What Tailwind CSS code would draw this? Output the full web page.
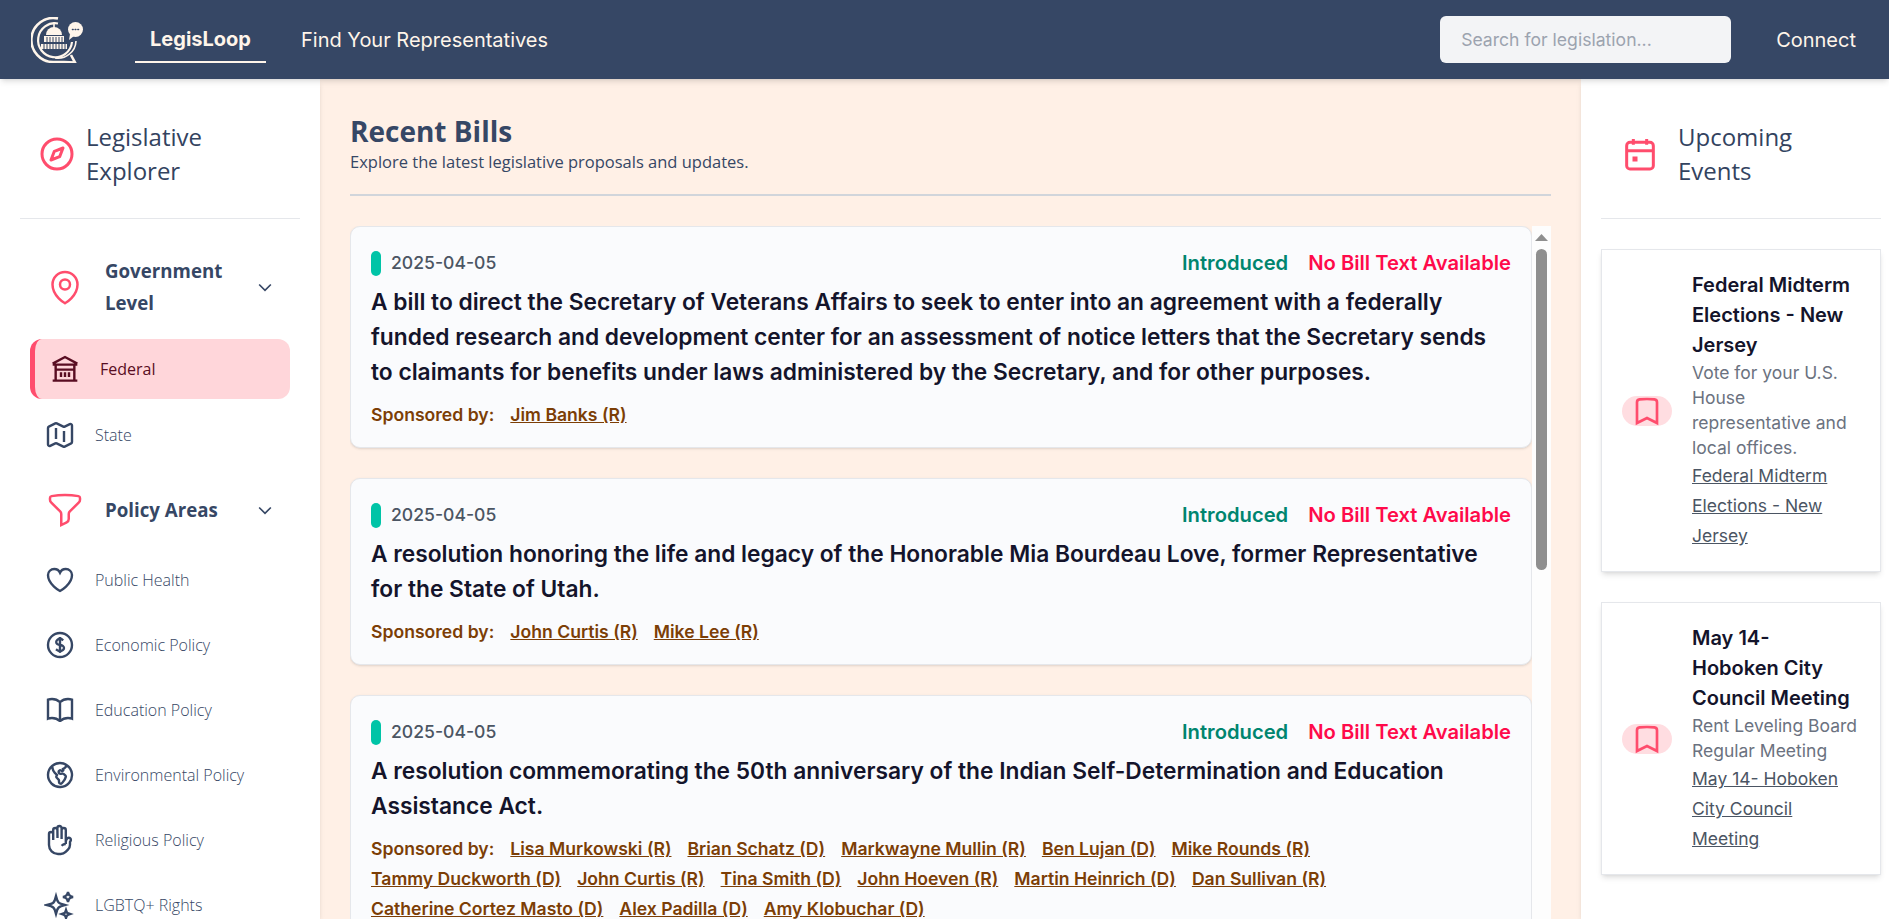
<!DOCTYPE html>
<html lang="en">
<head>
  <meta charset="UTF-8" />
  <meta name="viewport" content="width=device-width, initial-scale=1.0"/>
  <title>LegisLoop</title>
  <script src="https://cdn.jsdelivr.net/npm/@tailwindcss/browser@4"></script>
</head>
<body class="h-screen overflow-hidden flex flex-col bg-white font-['Inter',sans-serif]">

  <!-- top nav -->
  <header class="relative z-20 h-[79px] shrink-0 bg-[#364765] shadow-md flex items-center text-[#fff5ea]">
    <svg class="ml-[31px] w-[52px] h-[46px]" viewBox="0 0 52 46" fill="none" stroke="currentColor">
      <path d="M27 1.500A22 22 0 1 0 23 45H33L44 45.500L40 38" stroke-width="2.600"/>
      <path d="M27 6.500A17 17 0 1 0 41 25" stroke-width="2.200"/>
      <path d="M24 41A18 18 0 0 0 45 24" stroke-width="1.600"/>
      <path d="M10 27H36V32H10Z M13 19H33V25H13Z" fill="currentColor" stroke="none"/>
      <path d="M15 18A8 8 0 0 1 31 18Z" fill="currentColor" stroke="none"/>
      <path d="M23 5V12" stroke-width="1.600"/>
      <path d="M16 20V25M19 20V25M22 20V25M25 20V25M28 20V25M31 20V25" stroke="#364765" stroke-width="1"/>
      <path d="M13 27V32M16 27V32M19 27V32M22 27V32M25 27V32M28 27V32M31 27V32M34 27V32" stroke="#364765" stroke-width="1"/>
      <circle cx="44.500" cy="12.500" r="7.500" fill="currentColor" stroke="none"/>
      <path d="M39 17L38 23L43 19Z" fill="currentColor" stroke="none"/>
      <path d="M41.500 12.500h.6M44.200 12.500h.6M46.900 12.500h.6" stroke="#364765" stroke-width="1.600" stroke-linecap="round"/>
    </svg>
    <a class="ml-[52px] h-[47px] w-[131px] border-b-2 border-[#fff5ea] flex items-center justify-center text-xl font-bold">LegisLoop</a>
    <a class="ml-[35px] text-xl font-normal">Find Your Representatives</a>
    <input type="text" placeholder="Search for legislation..." class="ml-auto w-[291px] h-[47px] rounded-md bg-[#f3f4f6] px-[21px] text-[17.600px] text-gray-800 placeholder:text-[#9ca3af]" />
    <a class="ml-[45px] mr-[33px] text-xl font-normal">Connect</a>
  </header>

  <div class="flex flex-1 min-h-0">

    <!-- left sidebar -->
    <aside class="relative z-10 w-[320px] shrink-0 bg-white shadow-md overflow-hidden px-[20px] font-['Open_Sans',sans-serif] text-[#364765]">
      <div class="h-[140px] border-b border-[#e5e7eb] flex items-center gap-[9px] pl-[17px] pt-[10px]">
        <svg class="w-10 h-10 shrink-0 text-[#ff4d6d]" fill="none" viewBox="0 0 24 24" stroke="currentColor" stroke-width="1.800"><circle cx="12" cy="12" r="9"/><path d="M15.600 8.400 13.600 13.600 8.400 15.600 10.400 10.400Z" stroke-linejoin="round"/></svg>
        <h2 class="w-[130px] text-2xl leading-[34px] font-medium text-[#33435f]">Legislative Explorer</h2>
      </div>

      <div class="mt-[19px] h-[97px] flex items-center pl-[25px] pr-[25px]">
        <svg class="w-10 h-10 shrink-0 text-[#ff4d6d]" fill="none" viewBox="0 0 24 24" stroke="currentColor" stroke-width="1.500"><path d="M15 10.500a3 3 0 1 1-6 0 3 3 0 0 1 6 0Z"/><path d="M19.500 10.500c0 7.142-7.500 11.250-7.500 11.250S4.500 17.642 4.500 10.500a7.500 7.500 0 1 1 15 0Z"/></svg>
        <span class="ml-[20px] w-[125px] text-[18.700px] leading-8 font-bold">Government Level</span>
        <svg class="ml-auto w-5 h-5" fill="none" viewBox="0 0 24 24" stroke="currentColor" stroke-width="2"><path d="m5 9 7 7 7-7"/></svg>
      </div>

      <a class="mt-[4px] ml-[10px] w-[260px] h-[60px] rounded-xl bg-[#ffd6da] border-l-[5px] border-[#ff4d6d] flex items-center gap-[19px] pl-[14px] text-[#590d22] font-medium">
        <svg class="w-8 h-8 shrink-0" fill="none" viewBox="0 0 24 24" stroke="currentColor" stroke-width="1.800"><path d="M2.750 8 12 3l9.250 5M2.750 8.750h18.500M5 9v11.500M19 9v11.500M2.750 20.750h18.500M5 12.500h14M9 14.500v3.500M12 14.500v3.500M15 14.500v3.500"/></svg>
        Federal
      </a>
      <a class="mt-[6px] h-[60px] flex items-center gap-[19px] pl-[24px] font-light">
        <svg class="w-8 h-8 shrink-0" fill="none" viewBox="0 0 24 24" stroke="currentColor" stroke-width="1.800"><path d="M9 6.750V15m6-6v8.250m.503 3.498 4.875-2.437c.381-.19.622-.58.622-1.006V4.820c0-.836-.88-1.380-1.628-1.006l-3.869 1.934c-.317.159-.69.159-1.006 0L9.503 3.252a1.125 1.125 0 0 0-1.006 0L3.622 5.689C3.240 5.880 3 6.270 3 6.695V19.180c0 .836.88 1.380 1.628 1.006l3.869-1.934c.317-.159.69-.159 1.006 0l4.994 2.497c.317.158.69.158 1.006 0Z"/></svg>
        State
      </a>

      <div class="mt-[15px] h-[60px] flex items-center pl-[25px] pr-[25px]">
        <svg class="w-10 h-10 shrink-0 text-[#ff4d6d]" fill="none" viewBox="0 0 24 24" stroke="currentColor" stroke-width="1.500"><path d="M12 3c2.755 0 5.455.232 8.083.678.533.09.917.556.917 1.096v1.044a2.250 2.250 0 0 1-.659 1.591l-5.432 5.432a2.250 2.250 0 0 0-.659 1.591v2.927a2.250 2.250 0 0 1-1.244 2.013L9.750 21v-6.568a2.250 2.250 0 0 0-.659-1.591L3.659 7.409A2.250 2.250 0 0 1 3 5.818V4.774c0-.54.384-1.006.917-1.096A48.320 48.320 0 0 1 12 3Z"/></svg>
        <span class="ml-[20px] text-[18.700px] font-bold">Policy Areas</span>
        <svg class="ml-auto w-5 h-5" fill="none" viewBox="0 0 24 24" stroke="currentColor" stroke-width="2"><path d="m5 9 7 7 7-7"/></svg>
      </div>

      <div class="mt-[10px] flex flex-col gap-[5px] font-light">
        <a class="h-[60px] flex items-center gap-[19px] pl-[24px]">
          <svg class="w-8 h-8 shrink-0" fill="none" viewBox="0 0 24 24" stroke="currentColor" stroke-width="1.800"><path d="M21 8.250c0-2.485-2.099-4.500-4.688-4.500-1.935 0-3.597 1.126-4.312 2.733-.715-1.607-2.377-2.733-4.313-2.733C5.100 3.750 3 5.765 3 8.250c0 7.220 9 12 9 12s9-4.780 9-12Z"/></svg>
          Public Health
        </a>
        <a class="h-[60px] flex items-center gap-[19px] pl-[24px]">
          <svg class="w-8 h-8 shrink-0" fill="none" viewBox="0 0 24 24" stroke="currentColor" stroke-width="1.800"><path d="M12 6v12m-3-2.818.879.659c1.171.879 3.070.879 4.242 0 1.172-.879 1.172-2.303 0-3.182C13.536 12.219 12.768 12 12 12c-.725 0-1.450-.22-2.003-.659-1.106-.879-1.106-2.303 0-3.182s2.900-.879 4.006 0l.415.33M21 12a9 9 0 1 1-18 0 9 9 0 0 1 18 0Z"/></svg>
          Economic Policy
        </a>
        <a class="h-[60px] flex items-center gap-[19px] pl-[24px]">
          <svg class="w-8 h-8 shrink-0" fill="none" viewBox="0 0 24 24" stroke="currentColor" stroke-width="1.800"><path d="M12 6.042A8.967 8.967 0 0 0 6 3.750c-1.052 0-2.062.18-3 .512v14.250A8.987 8.987 0 0 1 6 18c2.305 0 4.408.867 6 2.292m0-14.250a8.966 8.966 0 0 1 6-2.292c1.052 0 2.062.18 3 .512v14.250A8.987 8.987 0 0 0 18 18a8.967 8.967 0 0 0-6 2.292m0-14.250v14.250"/></svg>
          Education Policy
        </a>
        <a class="h-[60px] flex items-center gap-[19px] pl-[24px]">
          <svg class="w-8 h-8 shrink-0" fill="none" viewBox="0 0 24 24" stroke="currentColor" stroke-width="1.800"><path d="m6.115 5.190.319 1.913A6 6 0 0 0 8.110 10.360L9.750 12l-.387.775c-.217.433-.132.956.21 1.298l1.348 1.348c.21.21.329.497.329.795v1.089c0 .426.24.815.622 1.006l.153.076c.433.217.956.132 1.298-.21l.723-.723a8.700 8.700 0 0 0 2.288-4.042 1.087 1.087 0 0 0-.358-1.099l-1.330-1.108c-.251-.21-.582-.299-.905-.245l-1.170.195a1.125 1.125 0 0 1-.98-.314l-.295-.295a1.125 1.125 0 0 1 0-1.591l.13-.132a1.125 1.125 0 0 1 1.300-.21l.603.302a.809.809 0 0 0 1.086-1.086L14.250 7.500l1.256-.837a4.500 4.500 0 0 0 1.528-1.732l.146-.292M6.115 5.190A9 9 0 1 0 17.180 4.640M6.115 5.190A8.965 8.965 0 0 1 12 3c1.929 0 3.716.607 5.180 1.640"/></svg>
          Environmental Policy
        </a>
        <a class="h-[60px] flex items-center gap-[19px] pl-[24px]">
          <svg class="w-8 h-8 shrink-0" fill="none" viewBox="0 0 24 24" stroke="currentColor" stroke-width="1.800"><path d="M10.050 4.575a1.575 1.575 0 1 0-3.150 0v3m3.150-3v-1.500a1.575 1.575 0 0 1 3.150 0v1.500m-3.150 0 .075 5.925m3.075.75V4.575m0 0a1.575 1.575 0 0 1 3.150 0V15M6.900 7.575a1.575 1.575 0 1 0-3.150 0v8.175a6.750 6.750 0 0 0 6.750 6.750h2.018a5.250 5.250 0 0 0 3.712-1.538l1.732-1.732a5.250 5.250 0 0 0 1.538-3.712l.003-2.024a.668.668 0 0 1 .198-.471 1.575 1.575 0 1 0-2.228-2.228 3.818 3.818 0 0 0-1.120 2.687M6.900 7.575V12m6.270 4.318A4.490 4.490 0 0 1 16.350 15m.002 0h-.002"/></svg>
          Religious Policy
        </a>
        <a class="h-[60px] flex items-center gap-[19px] pl-[24px]">
          <svg class="w-8 h-8 shrink-0" fill="none" viewBox="0 0 24 24" stroke="currentColor" stroke-width="1.800"><path d="M9.813 15.904 9 18.750l-.813-2.846a4.500 4.500 0 0 0-3.090-3.090L2.250 12l2.846-.813a4.500 4.500 0 0 0 3.090-3.090L9 5.250l.813 2.846a4.500 4.500 0 0 0 3.090 3.090L15.750 12l-2.846.813a4.500 4.500 0 0 0-3.090 3.090ZM18.259 8.715 18 9.750l-.259-1.035a3.375 3.375 0 0 0-2.455-2.456L14.250 6l1.036-.259a3.375 3.375 0 0 0 2.455-2.456L18 2.250l.259 1.035a3.375 3.375 0 0 0 2.456 2.456L21.750 6l-1.035.259a3.375 3.375 0 0 0-2.456 2.456ZM16.894 20.567 16.500 21.750l-.394-1.183a2.250 2.250 0 0 0-1.423-1.423L13.500 18.750l1.183-.394a2.250 2.250 0 0 0 1.423-1.423l.394-1.183.394 1.183a2.250 2.250 0 0 0 1.423 1.423l1.183.394-1.183.394a2.250 2.250 0 0 0-1.423 1.423Z"/></svg>
          LGBTQ+ Rights
        </a>
      </div>
    </aside>

    <!-- bills -->
    <main class="flex-1 min-w-0 bg-[#fff0e6] flex flex-col pl-[30px] pr-[30px]">
      <div class="h-[117px] shrink-0 border-b-2 border-[#d1d5db] pt-[34px] font-['Open_Sans',sans-serif] text-[#364765]">
        <h1 class="text-[28px] leading-[36px] font-bold">Recent Bills</h1>
        <p class="text-[16.500px] leading-6 mt-[1px]">Explore the latest legislative proposals and updates.</p>
      </div>

      <div class="mt-[30px] flex-1 min-h-0 flex">
        <div class="flex-1 min-w-0 overflow-hidden flex flex-col gap-[30px]">

          <article class="shrink-0 rounded-[10px] border border-[#e5e7eb] bg-[#fafbfd] shadow-sm px-[20px] pt-[24px] pb-[17px]">
            <div class="flex items-center h-[25px]">
              <span class="w-[10px] h-[25px] rounded-full bg-[#00c4a7]"></span>
              <span class="ml-[10px] text-[17.600px] font-medium text-[#4b5563]">2025-04-05</span>
              <span class="ml-auto text-[20.200px] font-semibold text-[#00856f]">Introduced</span>
              <span class="ml-[20px] text-[20.200px] font-semibold text-[#ff0a4a]">No Bill Text Available</span>
            </div>
            <h3 class="mt-[8px] text-[22.750px] leading-[35px] font-semibold text-[#14142b]">A bill to direct the Secretary of Veterans Affairs to seek to enter into an agreement with a federally funded research and development center for an assessment of notice letters that the Secretary sends to claimants for benefits under laws administered by the Secretary, and for other purposes.</h3>
            <div class="mt-[11px] flex flex-wrap gap-x-[16px] text-[17.600px] leading-[30px] font-semibold text-[#7c3e06]">
              <span>Sponsored by:</span>
              <a class="underline">Jim Banks (R)</a>
            </div>
          </article>

          <article class="shrink-0 rounded-[10px] border border-[#e5e7eb] bg-[#fafbfd] shadow-sm px-[20px] pt-[24px] pb-[17px]">
            <div class="flex items-center h-[25px]">
              <span class="w-[10px] h-[25px] rounded-full bg-[#00c4a7]"></span>
              <span class="ml-[10px] text-[17.600px] font-medium text-[#4b5563]">2025-04-05</span>
              <span class="ml-auto text-[20.200px] font-semibold text-[#00856f]">Introduced</span>
              <span class="ml-[20px] text-[20.200px] font-semibold text-[#ff0a4a]">No Bill Text Available</span>
            </div>
            <h3 class="mt-[8px] text-[22.750px] leading-[35px] font-semibold text-[#14142b]">A resolution honoring the life and legacy of the Honorable Mia Bourdeau Love, former Representative for the State of Utah.</h3>
            <div class="mt-[11px] flex flex-wrap gap-x-[16px] text-[17.600px] leading-[30px] font-semibold text-[#7c3e06]">
              <span>Sponsored by:</span>
              <a class="underline">John Curtis (R)</a>
              <a class="underline">Mike Lee (R)</a>
            </div>
          </article>

          <article class="shrink-0 rounded-[10px] border border-[#e5e7eb] bg-[#fafbfd] shadow-sm px-[20px] pt-[24px] pb-[17px]">
            <div class="flex items-center h-[25px]">
              <span class="w-[10px] h-[25px] rounded-full bg-[#00c4a7]"></span>
              <span class="ml-[10px] text-[17.600px] font-medium text-[#4b5563]">2025-04-05</span>
              <span class="ml-auto text-[20.200px] font-semibold text-[#00856f]">Introduced</span>
              <span class="ml-[20px] text-[20.200px] font-semibold text-[#ff0a4a]">No Bill Text Available</span>
            </div>
            <h3 class="mt-[8px] text-[22.750px] leading-[35px] font-semibold text-[#14142b]">A resolution commemorating the 50th anniversary of the Indian Self-Determination and Education Assistance Act.</h3>
            <div class="mt-[11px] flex flex-wrap gap-x-[16px] text-[17.600px] leading-[30px] font-semibold text-[#7c3e06]">
              <span>Sponsored by:</span>
              <a class="underline">Lisa Murkowski (R)</a>
              <a class="underline">Brian Schatz (D)</a>
              <a class="underline">Markwayne Mullin (R)</a>
              <a class="underline">Ben Lujan (D)</a>
              <a class="underline">Mike Rounds (R)</a>
              <a class="underline">Tammy Duckworth (D)</a>
              <a class="underline">John Curtis (R)</a>
              <a class="underline">Tina Smith (D)</a>
              <a class="underline">John Hoeven (R)</a>
              <a class="underline">Martin Heinrich (D)</a>
              <a class="underline">Dan Sullivan (R)</a>
              <a class="underline">Catherine Cortez Masto (D)</a>
              <a class="underline">Alex Padilla (D)</a>
              <a class="underline">Amy Klobuchar (D)</a>
            </div>
          </article>
        </div>

        <!-- scrollbar -->
        <div class="w-[19px] shrink-0 bg-[#fdfdfd] flex flex-col items-center pt-[8px]">
          <svg class="w-[13px] h-[7px] text-[#8f8f8f]" viewBox="0 0 13 7" fill="currentColor"><path d="M6.500 0 13 7H0Z"/></svg>
          <div class="mt-[8px] w-[11px] h-[321px] rounded-full bg-[#8f8f8f]"></div>
        </div>
      </div>
    </main>

    <!-- right sidebar -->
    <aside class="relative z-10 w-[308px] shrink-0 bg-white shadow-md overflow-hidden pl-[20px] pr-[8px]">
      <div class="h-[140px] border-b border-[#e5e7eb] flex items-center gap-[18px] pl-[19px] pt-[10px] font-['Open_Sans',sans-serif]">
        <svg class="w-10 h-10 shrink-0 text-[#ff4d6d]" fill="none" viewBox="0 0 24 24" stroke="currentColor" stroke-width="1.800"><rect x="4" y="5" width="16" height="16" rx="2"/><path d="M4 10h16M8 3v3.500M16 3v3.500"/><rect x="7.500" y="13.500" width="3" height="3" fill="currentColor" stroke="none"/></svg>
        <h2 class="w-[130px] text-2xl leading-[34px] font-medium text-[#33435f]">Upcoming Events</h2>
      </div>

      <div class="mt-[30px] flex flex-col gap-[30px]">
        <article class="flex items-center gap-5 border border-[#e5e7eb] bg-white shadow-md p-5">
          <span class="w-[50px] h-[30px] shrink-0 rounded-full bg-[#ffdde1] flex items-center justify-center text-[#ff4d6d]">
            <svg class="w-8 h-8" fill="none" viewBox="0 0 24 24" stroke="currentColor" stroke-width="2"><path d="M17.593 3.322c1.100.128 1.907 1.077 1.907 2.185V21L12 17.250 4.500 21V5.507c0-1.108.806-2.057 1.907-2.185a48.507 48.507 0 0 1 11.186 0Z"/></svg>
          </span>
          <div class="min-w-0 flex-1">
            <h4 class="text-xl leading-[30px] font-semibold text-[#14142b]">Federal Midterm Elections - New Jersey</h4>
            <p class="text-[17.500px] leading-[25px] text-[#6b7280]">Vote for your U.S. House representative and local offices.</p>
            <a class="block mt-[1px] text-[17.500px] leading-[30px] text-[#4b5563] underline">Federal Midterm Elections - New Jersey</a>
          </div>
        </article>

        <article class="flex items-center gap-5 border border-[#e5e7eb] bg-white shadow-md p-5">
          <span class="w-[50px] h-[30px] shrink-0 rounded-full bg-[#ffdde1] flex items-center justify-center text-[#ff4d6d]">
            <svg class="w-8 h-8" fill="none" viewBox="0 0 24 24" stroke="currentColor" stroke-width="2"><path d="M17.593 3.322c1.100.128 1.907 1.077 1.907 2.185V21L12 17.250 4.500 21V5.507c0-1.108.806-2.057 1.907-2.185a48.507 48.507 0 0 1 11.186 0Z"/></svg>
          </span>
          <div class="min-w-0 flex-1">
            <h4 class="text-xl leading-[30px] font-semibold text-[#14142b]">May 14- Hoboken City Council Meeting</h4>
            <p class="text-[17.500px] leading-[25px] text-[#6b7280]">Rent Leveling Board Regular Meeting</p>
            <a class="block mt-[1px] text-[17.500px] leading-[30px] text-[#4b5563] underline">May 14- Hoboken City Council Meeting</a>
          </div>
        </article>
      </div>
    </aside>
  </div>

</body>
</html>
